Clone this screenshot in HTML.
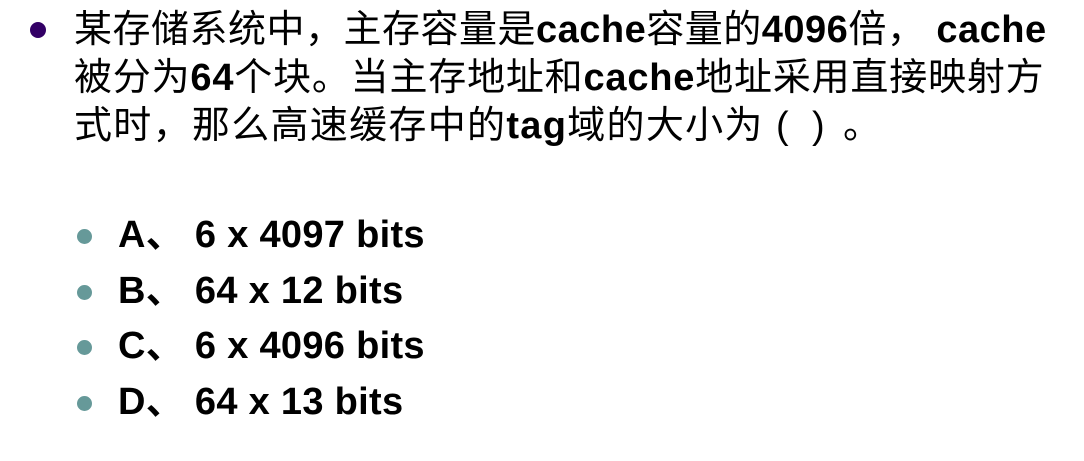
<!DOCTYPE html>
<html><head><meta charset="utf-8"><style>
body{margin:0;width:1084px;height:461px;background:#fff;position:relative;overflow:hidden;font-family:"Liberation Sans","Noto Sans CJK SC",sans-serif;color:#000}
.l{position:absolute;left:74px;font-size:38px;line-height:48px;white-space:nowrap}
b{font-weight:bold}
.o{position:absolute;left:118px;font-size:38px;line-height:56px;font-weight:bold;white-space:nowrap}
.d{position:absolute;border-radius:50%}
.p{position:absolute;top:100px;font-size:38px;line-height:48px;font-family:"Liberation Sans",sans-serif}
</style></head><body>
<div class="d" style="left:30px;top:22px;width:16px;height:16px;background:#330066"></div>
<div class="l" style="top:6px;letter-spacing:0.5px">某存储系统中，主存容量是<b>cache</b>容量的<b>4096</b>倍， <b>cache</b></div>
<div class="l" style="top:54px;letter-spacing:0.8px">被分为<b>64</b>个块。当主存地址和<b>cache</b>地址采用直接映射方</div>
<div class="l" style="top:102px;letter-spacing:1.3px">式时，那么高速缓存中的<b>tag</b>域的大小为</div>
<div class="p" style="left:776px;top:102px">(</div>
<div class="p" style="left:812px;top:102px">)</div>
<div class="l" style="left:843px;top:102px">。</div>
<div class="d" style="left:77px;top:229px;width:15px;height:15px;background:#669999"></div>
<div class="d" style="left:77px;top:285px;width:15px;height:15px;background:#669999"></div>
<div class="d" style="left:77px;top:340px;width:15px;height:15px;background:#669999"></div>
<div class="d" style="left:77px;top:396px;width:15px;height:15px;background:#669999"></div>
<div class="o" style="top:207px;letter-spacing:0.3px">A、 6 x 4097 bits</div>
<div class="o" style="top:263px;letter-spacing:0.3px">B、 64 x 12 bits</div>
<div class="o" style="top:318px;letter-spacing:0.3px">C、 6 x 4096 bits</div>
<div class="o" style="top:374px;letter-spacing:0.3px">D、 64 x 13 bits</div>
</body></html>
